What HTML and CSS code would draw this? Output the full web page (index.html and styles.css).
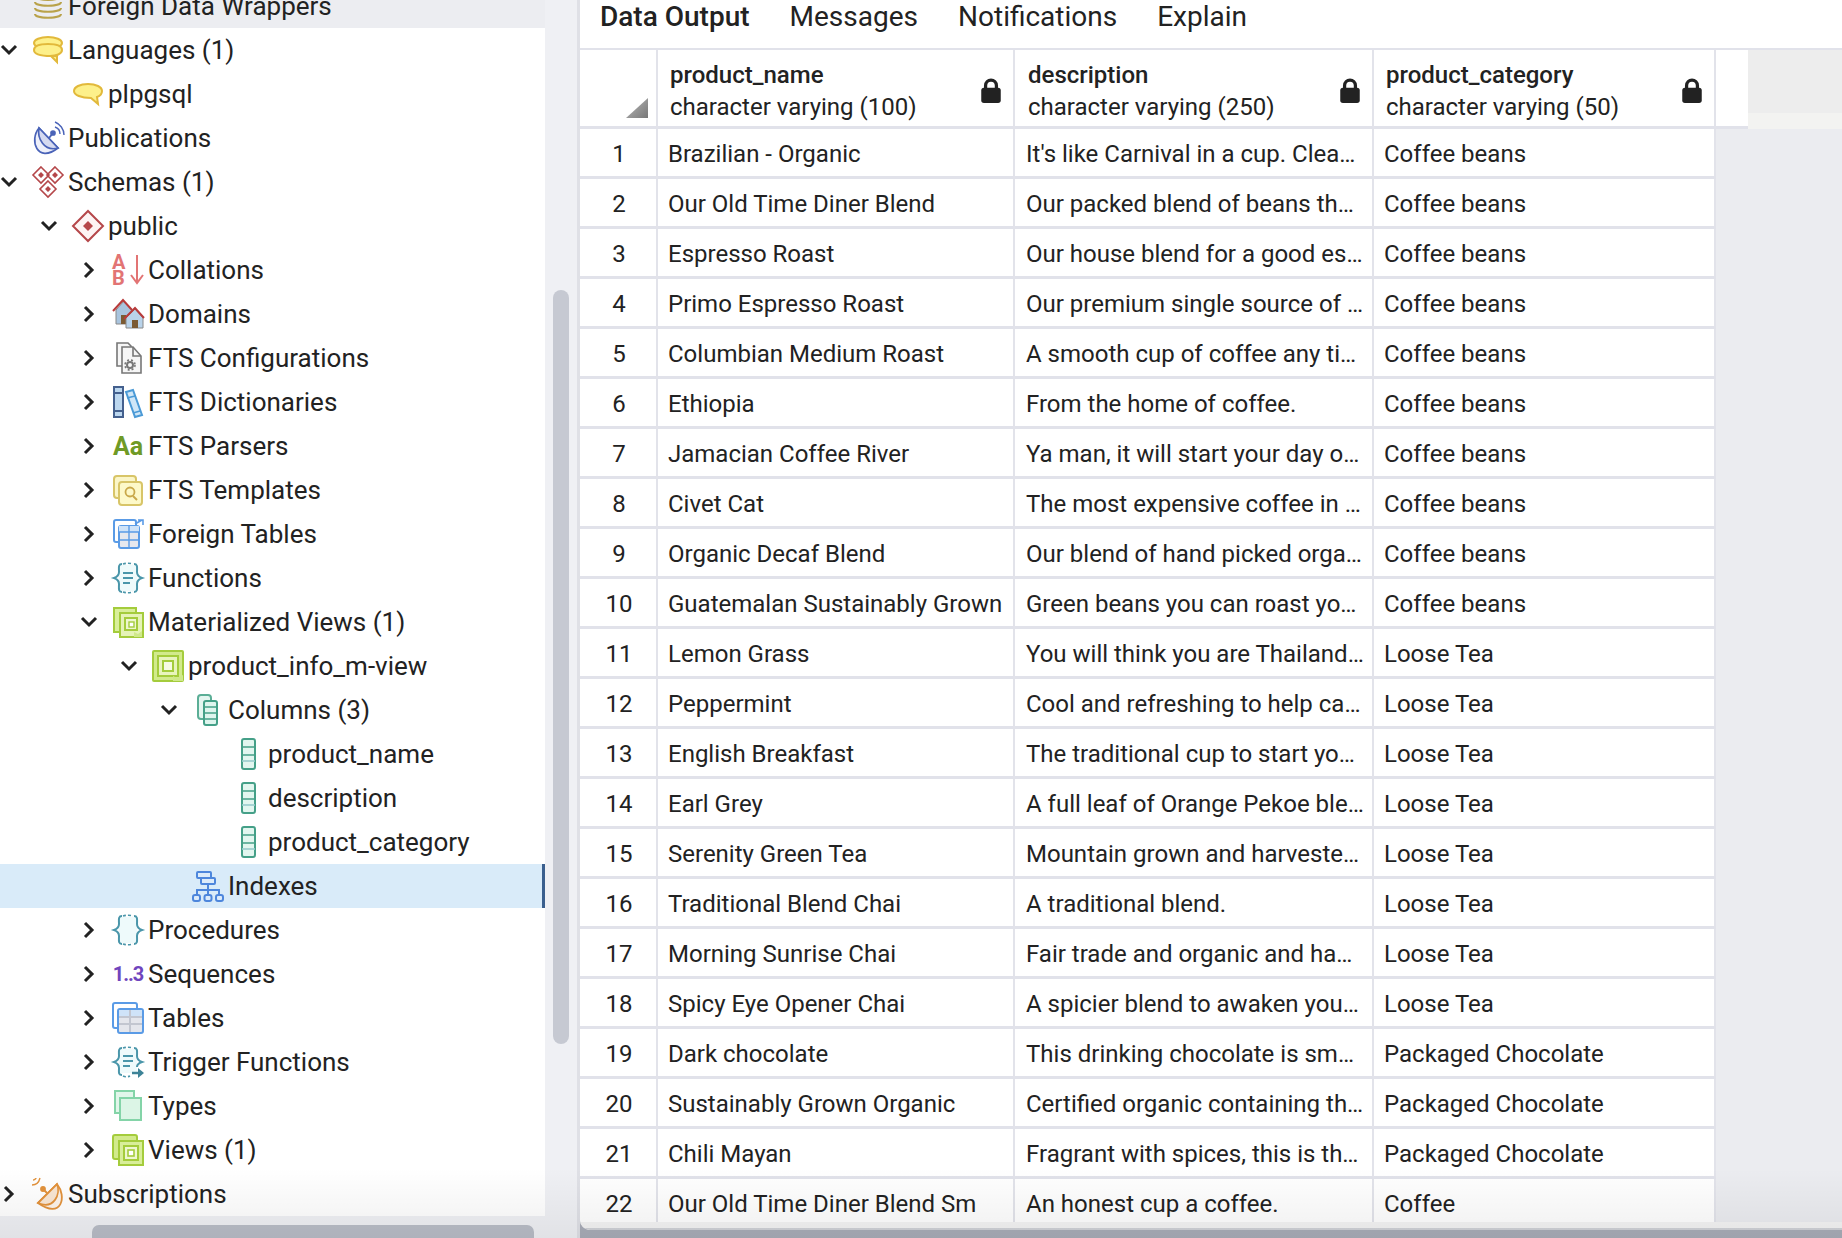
FILE: index.html
```html
<!DOCTYPE html>
<html lang="en">
<head>
    <meta charset="UTF-8">
    <title>product_info_m-view</title>
    <link rel="stylesheet" href="styles.css">
</head>
<body>
    <svg class="defs" width="0" height="0">
        <symbol id="caret-down" viewBox="0 0 20 20"><path d="M3 6l7 7 7-7" fill="none" stroke="#222" stroke-width="3"/></symbol>
        <symbol id="caret-right" viewBox="0 0 20 20"><path d="M6 3l7 7-7 7" fill="none" stroke="#222" stroke-width="3"/></symbol>

        <symbol id="i-fdw" viewBox="0 0 32 32"><g fill="#e8dcae" stroke="#b9a24a" stroke-width="2"><ellipse cx="16" cy="6" rx="13" ry="4"/><path d="M3 12c0 5 26 5 26 0M3 18c0 5 26 5 26 0M3 24c0 5 26 5 26 0" fill="none"/></g></symbol>
        <symbol id="i-langs" viewBox="0 0 32 32"><g fill="#fdf08a" stroke="#e2b93b" stroke-width="2"><ellipse cx="16" cy="9" rx="14" ry="6"/><path d="M2 16c0-4 6-6 14-6s14 2 14 6-6 6-12 6l7 0 0 6-6-6C8 22 2 20 2 16z"/></g></symbol>
        <symbol id="i-lang" viewBox="0 0 32 32"><path d="M2 13c0-4 6-7 14-7s14 3 14 7c0 3-2 5-5 6l1 7-7-6C9 20 2 17 2 13z" fill="#fdf08a" stroke="#e2b93b" stroke-width="2"/></symbol>
        <symbol id="i-pub" viewBox="0 0 32 32"><g stroke="#4a63b8" stroke-width="1.7"><path d="M7 6C-3 18 5 42 26 26z" fill="#eef0fa"/><path d="M7 6C5 16 12 30 26 26z" fill="#d5daf0"/><path d="M17 16l4-5" fill="none" stroke-width="2"/><circle cx="21" cy="11" r="2" fill="#4a63b8"/><path d="M23 0c5 2 9 7 9 13M23 5c3 1 5 3 5 7" fill="none" stroke-width="1.4"/></g></symbol>
        <symbol id="i-schemas" viewBox="0 0 32 32"><g fill="#fff" stroke="#b5474a" stroke-width="1.6"><path d="M9 1l8 8-8 8-8-8zM23 1l8 8-8 8-8-8zM16 15l8 8-8 8-8-8z"/></g><g fill="#b5474a"><path d="M9 6l3 3-3 3-3-3zM23 6l3 3-3 3-3-3zM16 20l3 3-3 3-3-3z"/></g></symbol>
        <symbol id="i-schema" viewBox="0 0 32 32"><path d="M16 1l15 15-15 15L1 16z" fill="#fdf4f4" stroke="#b5474a" stroke-width="2"/><path d="M16 11l5 5-5 5-5-5z" fill="#b5474a"/></symbol>
        <symbol id="i-arrow" viewBox="0 0 14 32"><path d="M7 1v28M1 21l6 8 6-8" fill="none" stroke="#e27474" stroke-width="2"/></symbol>
        <symbol id="i-domain" viewBox="0 0 32 32"><path d="M4 12l8-9 8 9v14H4z" fill="#a9c4de" stroke="#888" stroke-width="1"/><path d="M9 17h5v9H9z" fill="#7b5a32"/><path d="M1 13L11 2l9 10" fill="none" stroke="#b83b3b" stroke-width="2"/><path d="M14 20l9-9 8 9v10H14z" fill="#b9d3ea" stroke="#888" stroke-width="1"/><path d="M20 22h6v8h-6z" fill="#7b5a32"/><path d="M12 21l11-11 9 10" fill="none" stroke="#b83b3b" stroke-width="2"/></symbol>
        <symbol id="i-ftsconf" viewBox="0 0 32 32"><g fill="#f6f6f6" stroke="#777" stroke-width="1.6"><path d="M5 1h11l3 3v20H5z"/><path d="M10 5h11l8 9v17H10z"/><path d="M21 5v9h8" fill="none"/></g><circle cx="18" cy="23" r="3" fill="none" stroke="#777" stroke-width="2"/><circle cx="18" cy="23" r="5" fill="none" stroke="#777" stroke-width="1.6" stroke-dasharray="2 2"/></symbol>
        <symbol id="i-ftsdict" viewBox="0 0 32 32"><rect x="2" y="1" width="9" height="30" fill="#bcd7ef" stroke="#44608e" stroke-width="2"/><path d="M2 7h9M2 25h9" stroke="#44608e" stroke-width="2"/><path d="M14 6l7-2 9 25-7 2z" fill="#cfe6f7" stroke="#4b9ad6" stroke-width="2"/><path d="M15 12l8-2M21 27l7-2" stroke="#4b9ad6" stroke-width="1.6"/></symbol>
        <symbol id="i-ftstpl" viewBox="0 0 32 32"><rect x="2" y="2" width="22" height="22" rx="3" fill="#fbf6c8" stroke="#d8c568" stroke-width="2"/><rect x="7" y="8" width="23" height="23" rx="3" fill="#fdf9c9" stroke="#d8c568" stroke-width="2"/><circle cx="18" cy="18" r="4.5" fill="none" stroke="#c9a94a" stroke-width="1.8"/><path d="M21 22l4 4" stroke="#c9a94a" stroke-width="2"/></symbol>
        <symbol id="i-ftable" viewBox="0 0 32 32"><rect x="2" y="2" width="22" height="22" rx="2" fill="#fff" stroke="#5a9be6" stroke-width="2"/><rect x="7" y="8" width="20" height="22" rx="2" fill="#e6e8ee" stroke="#5a9be6" stroke-width="2"/><path d="M7 14h20v-6H7z" fill="#cfe3f8"/><path d="M17 8v22M7 14h20M7 22h20" stroke="#5a9be6" stroke-width="1.4"/><path d="M23 6l7-4M26 2h5v5" fill="none" stroke="#5a9be6" stroke-width="1.6"/></symbol>
        <symbol id="i-func" viewBox="0 0 32 32"><rect x="7" y="3" width="18" height="26" fill="#eefafb"/><path d="M10 2C6 2 7 6 7 10c0 3-2 5-5 6 3 1 5 3 5 6 0 4-1 8 3 8M22 2c4 0 3 4 3 8 0 3 2 5 5 6-3 1-5 3-5 6 0 4 1 8-3 8" fill="none" stroke="#4a96aa" stroke-width="2"/><path d="M11 2c3-1 7-1 10 0M11 30c3 1 7 1 10 0" fill="none" stroke="#4a96aa" stroke-dasharray="3 2" stroke-width="1.6"/><path d="M11 11h10M11 16h10M11 21h7" stroke="#4a96aa" stroke-width="2"/></symbol>
        <symbol id="i-proc" viewBox="0 0 32 32"><rect x="7" y="3" width="18" height="26" fill="#eefafb"/><path d="M10 2C6 2 7 6 7 10c0 3-2 5-5 6 3 1 5 3 5 6 0 4-1 8 3 8M22 2c4 0 3 4 3 8 0 3 2 5 5 6-3 1-5 3-5 6 0 4 1 8-3 8" fill="none" stroke="#4a96aa" stroke-width="2"/><path d="M11 2c3-1 7-1 10 0M11 30c3 1 7 1 10 0" fill="none" stroke="#4a96aa" stroke-dasharray="3 2" stroke-width="1.6"/></symbol>
        <symbol id="i-trig" viewBox="0 0 32 32"><rect x="7" y="3" width="18" height="24" fill="#eefafb"/><path d="M10 2C6 2 7 6 7 10c0 3-2 5-5 6 3 1 5 3 5 6 0 4-1 7 3 7M22 2c4 0 3 4 3 8 0 3 2 5 5 6-3 1-5 3-5 5" fill="none" stroke="#4a96aa" stroke-width="2"/><path d="M11 2c3-1 7-1 10 0M11 30c2 1 5 1 7 0" fill="none" stroke="#4a96aa" stroke-dasharray="3 2" stroke-width="1.6"/><path d="M11 10h10M11 15h10M11 20h7" stroke="#4a96aa" stroke-width="2"/><path d="M20 27h7" stroke="#3d8397" stroke-width="2.5"/><path d="M26 22l6 5-6 5z" fill="#3d8397"/></symbol>
        <symbol id="i-mviews" viewBox="0 0 32 32"><path d="M1 1h24v5h5v25H8v-5H1z" fill="#cfe88a"/><path d="M2 2h22v24H2z" fill="#d9ef9a" stroke="#a4cc3c" stroke-width="2"/><rect x="8" y="7" width="23" height="24" fill="#e5f3b7" stroke="#a4cc3c" stroke-width="2"/><rect x="13" y="12" width="12" height="12" fill="#eef7cf" stroke="#a4cc3c" stroke-width="2"/><rect x="17" y="16" width="5" height="5" fill="#fff" stroke="#a4cc3c" stroke-width="1.4"/><path d="M22 31v-5l4 2 4-3v6z" fill="#cfe88a"/></symbol>
        <symbol id="i-mview" viewBox="0 0 32 32"><rect x="1" y="1" width="30" height="30" rx="1" fill="#d2ea8c" stroke="#a4cc3c" stroke-width="2"/><rect x="6" y="6" width="20" height="20" fill="#e8f4bd" stroke="#a4cc3c" stroke-width="2"/><rect x="11" y="11" width="10" height="10" fill="#f6fbe4" stroke="#a4cc3c" stroke-width="2"/><path d="M21 31v-5l4 2 6-3v6z" fill="#cfe88a"/></symbol>
        <symbol id="i-views" viewBox="0 0 32 32"><rect x="1" y="1" width="24" height="24" rx="2" fill="#d2ea8c" stroke="#a4cc3c" stroke-width="2"/><rect x="7" y="7" width="24" height="24" fill="#d8ee99" stroke="#a4cc3c" stroke-width="2"/><rect x="12" y="12" width="14" height="14" fill="#eef7cf" stroke="#a4cc3c" stroke-width="2"/><rect x="16" y="16" width="6" height="6" fill="#fff" stroke="#a4cc3c" stroke-width="1.6"/></symbol>
        <symbol id="i-cols" viewBox="0 0 32 32"><rect x="6" y="1" width="13" height="24" rx="3" fill="#e4f6f0" stroke="#5bae96" stroke-width="2"/><rect x="12" y="7" width="13" height="24" rx="2" fill="#dff5ee" stroke="#45a088" stroke-width="2"/><path d="M12 13h13M12 19h13M12 25h13" stroke="#45a088" stroke-width="1.6"/></symbol>
        <symbol id="i-col" viewBox="0 0 32 32"><rect x="10" y="1" width="13" height="30" rx="2" fill="#e2f6ef" stroke="#45a088" stroke-width="2"/><path d="M10 9h13M10 17h13" stroke="#45a088" stroke-width="1.6"/><path d="M10 23h13" stroke="#9cc" stroke-width="1.6"/></symbol>
        <symbol id="i-index" viewBox="0 0 32 32"><g fill="#dcebfa" stroke="#4d86dc" stroke-width="2"><rect x="5" y="2" width="14" height="6" rx="1"/><rect x="9" y="8" width="14" height="6" rx="1"/><path d="M16 14v6M5 25v-5h22v5M16 20v5" fill="none"/><rect x="1" y="25" width="7" height="6" rx="2"/><rect x="12.500" y="25" width="7" height="6" rx="2"/><rect x="24" y="25" width="7" height="6" rx="2"/></g></symbol>
        <symbol id="i-table" viewBox="0 0 32 32"><rect x="1" y="1" width="24" height="25" rx="2" fill="#fff" stroke="#5a9be6" stroke-width="2"/><rect x="6" y="7" width="25" height="24" rx="2" fill="#e4e6ec" stroke="#5a9be6" stroke-width="2"/><path d="M7 8h23v7H7z" fill="#cfe3f8"/><path d="M18 8v22M7 15h23M7 22h23" stroke="#c2c6d0" stroke-width="2"/></symbol>
        <symbol id="i-type" viewBox="0 0 32 32"><rect x="3" y="1" width="19" height="22" fill="#e1f6ea" stroke="#84d4a8" stroke-width="2"/><rect x="8" y="8" width="21" height="22" fill="#dcf5e6" stroke="#84d4a8" stroke-width="2"/></symbol>
        <symbol id="i-sub" viewBox="0 0 32 32"><g stroke="#e2923c" stroke-width="1.8"><path d="M25 6C35 18 30 42 6 25z" fill="#fdf3e9"/><path d="M25 6C29 16 22 32 6 25z" fill="#f9e6d3"/><path d="M15 15l-4-4" fill="none" stroke-width="2"/><circle cx="11" cy="11" r="2" fill="#e2923c"/><path d="M0 7c4 0 7-3 8-7M1 2c1 0 3-1 3-2" fill="none" stroke-width="1.4"/></g></symbol>
        <symbol id="lock" viewBox="0 0 20 24"><path d="M5 10V7a5 5 0 0 1 10 0v3" fill="none" stroke="#222" stroke-width="3"/><rect x="1" y="9" width="18" height="14" rx="2.500" fill="#222"/></symbol>
    </svg>

    <div class="app">
        <aside class="browser">
            <ul class="tree">
                <li class="node fold lvl-0"><span class="caret"></span><svg class="icon"><use href="#i-fdw"/></svg>Foreign Data Wrappers</li>
                <li class="node lvl-0"><svg class="caret"><use href="#caret-down"/></svg><svg class="icon"><use href="#i-langs"/></svg>Languages (1)</li>
                <li class="node lvl-1"><span class="caret"></span><svg class="icon"><use href="#i-lang"/></svg>plpgsql</li>
                <li class="node lvl-0"><span class="caret"></span><svg class="icon"><use href="#i-pub"/></svg>Publications</li>
                <li class="node lvl-0"><svg class="caret"><use href="#caret-down"/></svg><svg class="icon"><use href="#i-schemas"/></svg>Schemas (1)</li>
                <li class="node lvl-1"><svg class="caret"><use href="#caret-down"/></svg><svg class="icon"><use href="#i-schema"/></svg>public</li>
                <li class="node lvl-2"><svg class="caret"><use href="#caret-right"/></svg><span class="icon coll"><span class="ab"><b>A</b><b>B</b></span><svg class="coll-arrow"><use href="#i-arrow"/></svg></span>Collations</li>
                <li class="node lvl-2"><svg class="caret"><use href="#caret-right"/></svg><svg class="icon"><use href="#i-domain"/></svg>Domains</li>
                <li class="node lvl-2"><svg class="caret"><use href="#caret-right"/></svg><svg class="icon"><use href="#i-ftsconf"/></svg>FTS Configurations</li>
                <li class="node lvl-2"><svg class="caret"><use href="#caret-right"/></svg><svg class="icon"><use href="#i-ftsdict"/></svg>FTS Dictionaries</li>
                <li class="node lvl-2"><svg class="caret"><use href="#caret-right"/></svg><span class="icon icon-text aa">Aa</span>FTS Parsers</li>
                <li class="node lvl-2"><svg class="caret"><use href="#caret-right"/></svg><svg class="icon"><use href="#i-ftstpl"/></svg>FTS Templates</li>
                <li class="node lvl-2"><svg class="caret"><use href="#caret-right"/></svg><svg class="icon"><use href="#i-ftable"/></svg>Foreign Tables</li>
                <li class="node lvl-2"><svg class="caret"><use href="#caret-right"/></svg><svg class="icon"><use href="#i-func"/></svg>Functions</li>
                <li class="node lvl-2"><svg class="caret"><use href="#caret-down"/></svg><svg class="icon"><use href="#i-mviews"/></svg>Materialized Views (1)</li>
                <li class="node lvl-3"><svg class="caret"><use href="#caret-down"/></svg><svg class="icon"><use href="#i-mview"/></svg>product_info_m-view</li>
                <li class="node lvl-4"><svg class="caret"><use href="#caret-down"/></svg><svg class="icon"><use href="#i-cols"/></svg>Columns (3)</li>
                <li class="node lvl-5"><span class="caret"></span><svg class="icon"><use href="#i-col"/></svg>product_name</li>
                <li class="node lvl-5"><span class="caret"></span><svg class="icon"><use href="#i-col"/></svg>description</li>
                <li class="node lvl-5"><span class="caret"></span><svg class="icon"><use href="#i-col"/></svg>product_category</li>
                <li class="node selected lvl-4"><span class="caret"></span><svg class="icon"><use href="#i-index"/></svg>Indexes</li>
                <li class="node lvl-2"><svg class="caret"><use href="#caret-right"/></svg><svg class="icon"><use href="#i-proc"/></svg>Procedures</li>
                <li class="node lvl-2"><svg class="caret"><use href="#caret-right"/></svg><span class="icon icon-text seq">1..3</span>Sequences</li>
                <li class="node lvl-2"><svg class="caret"><use href="#caret-right"/></svg><svg class="icon"><use href="#i-table"/></svg>Tables</li>
                <li class="node lvl-2"><svg class="caret"><use href="#caret-right"/></svg><svg class="icon"><use href="#i-trig"/></svg>Trigger Functions</li>
                <li class="node lvl-2"><svg class="caret"><use href="#caret-right"/></svg><svg class="icon"><use href="#i-type"/></svg>Types</li>
                <li class="node lvl-2"><svg class="caret"><use href="#caret-right"/></svg><svg class="icon"><use href="#i-views"/></svg>Views (1)</li>
                <li class="node lvl-0"><svg class="caret"><use href="#caret-right"/></svg><svg class="icon"><use href="#i-sub"/></svg>Subscriptions</li>
            </ul>
            <div class="vbar"></div>
            <div class="hbar"></div>
        </aside>

        <main class="output">
            <div class="panel">
                <nav class="tabs">
                    <span class="tab active">Data Output</span>
                    <span class="tab">Messages</span>
                    <span class="tab">Notifications</span>
                    <span class="tab">Explain</span>
                </nav>
                <div class="grid-wrap">
                    <table class="grid">
                        <thead>
                            <tr>
                                <th class="corner"><span class="sort-mark"></span></th>
                                <th class="col-name"><div class="head"><div><b>product_name</b><span>character varying (100)</span></div><svg class="lock"><use href="#lock"/></svg></div></th>
                                <th class="col-desc"><div class="head"><div><b>description</b><span>character varying (250)</span></div><svg class="lock"><use href="#lock"/></svg></div></th>
                                <th class="col-cat"><div class="head"><div><b>product_category</b><span>character varying (50)</span></div><svg class="lock"><use href="#lock"/></svg></div></th>
                            </tr>
                        </thead>
                        <tbody>
                            <tr><td class="num">1</td><td>Brazilian - Organic</td><td class="desc">It's like Carnival in a cup. Clea…</td><td>Coffee beans</td></tr>
                            <tr><td class="num">2</td><td>Our Old Time Diner Blend</td><td class="desc">Our packed blend of beans th…</td><td>Coffee beans</td></tr>
                            <tr><td class="num">3</td><td>Espresso Roast</td><td class="desc">Our house blend for a good es…</td><td>Coffee beans</td></tr>
                            <tr><td class="num">4</td><td>Primo Espresso Roast</td><td class="desc">Our premium single source of …</td><td>Coffee beans</td></tr>
                            <tr><td class="num">5</td><td>Columbian Medium Roast</td><td class="desc">A smooth cup of coffee any ti…</td><td>Coffee beans</td></tr>
                            <tr><td class="num">6</td><td>Ethiopia</td><td class="desc">From the home of coffee.</td><td>Coffee beans</td></tr>
                            <tr><td class="num">7</td><td>Jamacian Coffee River</td><td class="desc">Ya man, it will start your day o…</td><td>Coffee beans</td></tr>
                            <tr><td class="num">8</td><td>Civet Cat</td><td class="desc">The most expensive coffee in …</td><td>Coffee beans</td></tr>
                            <tr><td class="num">9</td><td>Organic Decaf Blend</td><td class="desc">Our blend of hand picked orga…</td><td>Coffee beans</td></tr>
                            <tr><td class="num">10</td><td>Guatemalan Sustainably Grown</td><td class="desc">Green beans you can roast yo…</td><td>Coffee beans</td></tr>
                            <tr><td class="num">11</td><td>Lemon Grass</td><td class="desc">You will think you are Thailand…</td><td>Loose Tea</td></tr>
                            <tr><td class="num">12</td><td>Peppermint</td><td class="desc">Cool and refreshing to help ca…</td><td>Loose Tea</td></tr>
                            <tr><td class="num">13</td><td>English Breakfast</td><td class="desc">The traditional cup to start yo…</td><td>Loose Tea</td></tr>
                            <tr><td class="num">14</td><td>Earl Grey</td><td class="desc">A full leaf of Orange Pekoe ble…</td><td>Loose Tea</td></tr>
                            <tr><td class="num">15</td><td>Serenity Green Tea</td><td class="desc">Mountain grown and harveste…</td><td>Loose Tea</td></tr>
                            <tr><td class="num">16</td><td>Traditional Blend Chai</td><td class="desc">A traditional blend.</td><td>Loose Tea</td></tr>
                            <tr><td class="num">17</td><td>Morning Sunrise Chai</td><td class="desc">Fair trade and organic and ha…</td><td>Loose Tea</td></tr>
                            <tr><td class="num">18</td><td>Spicy Eye Opener Chai</td><td class="desc">A spicier blend to awaken you…</td><td>Loose Tea</td></tr>
                            <tr><td class="num">19</td><td>Dark chocolate</td><td class="desc">This drinking chocolate is sm…</td><td>Packaged Chocolate</td></tr>
                            <tr><td class="num">20</td><td>Sustainably Grown Organic</td><td class="desc">Certified organic containing th…</td><td>Packaged Chocolate</td></tr>
                            <tr><td class="num">21</td><td>Chili Mayan</td><td class="desc">Fragrant with spices, this is th…</td><td>Packaged Chocolate</td></tr>
                            <tr><td class="num">22</td><td>Our Old Time Diner Blend Sm</td><td class="desc">An honest cup a coffee.</td><td>Coffee</td></tr>
                        </tbody>
                    </table>
                    <div class="head-rest"></div>
                    <div class="head-fill"></div>
                </div>
                <div class="strip"></div>
            </div>
        </main>
    </div>
</body>
</html>
```

FILE: styles.css
```css
* {
    box-sizing: border-box;
}
html, body {
    margin: 0;
    padding: 0;
    height: 100%;
    overflow: hidden;
}
body {
    font-family: Roboto, "Liberation Sans", sans-serif;
    color: #222;
    background: #eff0f4;
}
.defs {
    position: absolute;
}
symbol {
    overflow: visible;
}
.app {
    position: relative;
    display: flex;
    height: 1238px;
}
/* soft fade along the bottom edge */
.app::after {
    content: "";
    position: absolute;
    left: 0;
    right: 0;
    bottom: 0;
    height: 70px;
    background: linear-gradient(rgba(0,0,0,0), rgba(0,0,0,0.06));
    pointer-events: none;
}

/* object browser */
.browser {
    position: relative;
    width: 580px;
    flex: none;
    overflow: hidden;
    background: #eff0f4;
    border-right: 3px solid #dfe0e6;
}
.tree {
    list-style: none;
    width: 545px;
    height: 1216px;
    margin: 0;
    padding: 0;
    background: #fff;
    overflow: hidden;
}
.node {
    display: flex;
    align-items: center;
    height: 44px;
    font-size: 26px;
    white-space: nowrap;
}
.node:first-child {
    margin-top: -16px;
}
.fold {
    background: #ecedf1;
}
.selected {
    background: #d9ebf9;
    border-right: 3px solid #3b5f8e;
}
.lvl-0 { padding-left: 0; }
.lvl-1 { padding-left: 40px; }
.lvl-2 { padding-left: 80px; }
.lvl-3 { padding-left: 120px; }
.lvl-4 { padding-left: 160px; }
.lvl-5 { padding-left: 200px; }
.caret {
    width: 20px;
    height: 20px;
    margin-left: -1px;
    margin-right: 13px;
    flex: none;
}
.icon {
    width: 32px;
    height: 32px;
    margin-right: 4px;
    overflow: visible;
    flex: none;
}
.icon-text {
    display: flex;
    align-items: center;
    justify-content: center;
    font-weight: 700;
    white-space: nowrap;
}
.aa {
    font-size: 25px;
    color: #6f9a26;
}
.seq {
    font-size: 20px;
    letter-spacing: -1px;
    color: #6f45bd;
}
.coll {
    display: flex;
    justify-content: space-between;
    color: #e27474;
}
.ab {
    display: flex;
    flex-direction: column;
    font-size: 20px;
    line-height: 16px;
}
.coll-arrow {
    width: 14px;
    height: 32px;
    flex: none;
}
.vbar {
    position: absolute;
    left: 553px;
    top: 290px;
    width: 16px;
    height: 754px;
    border-radius: 8px;
    background: #c6c9d2;
}
.hbar {
    position: absolute;
    left: 92px;
    bottom: 0;
    width: 442px;
    height: 13px;
    border-radius: 7px 7px 0 0;
    background: #b9bdc7;
}

/* data output */
.output {
    flex: 1;
    min-width: 0;
    padding-bottom: 8px;
    background: #a9adb8;
}
.panel {
    display: flex;
    flex-direction: column;
    height: 100%;
    overflow: hidden;
    border-bottom-left-radius: 10px;
    background: #ebecf0;
}
.tabs {
    display: flex;
    flex: none;
    gap: 40px;
    height: 50px;
    padding: 0 20px;
    background: #fff;
    border-bottom: 2px solid #e1e2ea;
    align-items: center;
    font-size: 28px;
}
.tab {
    margin-top: -16px;
}
.active {
    font-weight: 500;
}
.grid-wrap {
    position: relative;
    flex: 1;
    min-height: 0;
    overflow: hidden;
}
.grid {
    border-collapse: separate;
    border-spacing: 0;
    table-layout: fixed;
    width: 1136px;
    background: #fff;
    font-size: 24px;
}
.grid th, .grid td {
    padding: 0;
    border-right: 2px solid #e2e3ea;
    border-bottom: 3px solid #e1e2ea;
    font-weight: 400;
    text-align: left;
    white-space: nowrap;
    overflow: hidden;
}
.grid td {
    height: 50px;
    padding: 3px 0 0 10px;
}
.grid .desc {
    padding-left: 11px;
}
.grid th {
    height: 79px;
    padding: 5px 11px 0 12px;
}
.grid .col-desc {
    padding-left: 13px;
}
.grid .corner {
    position: relative;
    width: 78px;
    padding: 0;
}
.col-name { width: 357px; }
.col-desc { width: 359px; }
.col-cat { width: 342px; }
.grid .num {
    padding: 3px 0 0 2px;
    text-align: center;
}
.sort-mark {
    position: absolute;
    right: 8px;
    bottom: 8px;
    width: 22px;
    height: 20px;
    clip-path: polygon(100% 0, 100% 100%, 0 100%);
    background: linear-gradient(135deg, #bbb, #777);
}
.head {
    display: flex;
    align-items: center;
    justify-content: space-between;
}
.head b {
    display: block;
    font-weight: 500;
    line-height: 32px;
}
.head span {
    display: block;
    line-height: 32px;
}
.lock {
    width: 22px;
    height: 26px;
    flex: none;
}
.head-rest {
    position: absolute;
    left: 1136px;
    top: 0;
    width: 32px;
    height: 79px;
    background: #fff;
    border-bottom: 3px solid #e1e2ea;
}
.head-fill {
    position: absolute;
    left: 1168px;
    right: 0;
    top: 0;
    height: 79px;
    background: linear-gradient(#ededed 63px, #f3f3f1 63px);
}
.strip {
    flex: none;
    height: 8px;
    background: #f4f4f4;
    border-bottom: 2px solid #d0d2d7;
}
```
